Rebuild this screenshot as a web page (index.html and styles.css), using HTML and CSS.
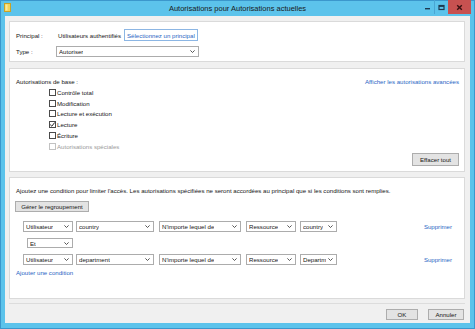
FILE: index.html
```html
<!DOCTYPE html>
<html lang="fr">
<head>
<meta charset="utf-8">
<title>Autorisations pour Autorisations actuelles</title>
<link rel="stylesheet" href="styles.css">
</head>
<body>
<div class="window">
  <div class="titlebar">
    <div class="tb-left">
      <svg class="app-icon" width="7" height="9" viewBox="0 0 7 9"><rect x="0.5" y="0.5" width="6" height="8" fill="#f3d35a" stroke="#c9a227"/><rect x="1.5" y="1.5" width="2" height="6" fill="#fbe99a"/></svg>
    </div>
    <div class="title">Autorisations pour Autorisations actuelles</div>
    <div class="tb-right">
      <div class="ctl ctl-min"><svg width="7" height="7" viewBox="0 0 7 7"><rect x="1" y="4" width="5" height="1.4" fill="#1d3a52"/></svg></div>
      <div class="ctl ctl-max"><svg width="7" height="7" viewBox="0 0 7 7"><rect x="1" y="1.5" width="5" height="4" fill="none" stroke="#1d3a52" stroke-width="1.2"/><rect x="1" y="1.5" width="5" height="1.4" fill="#1d3a52"/></svg></div>
      <div class="ctl ctl-close"><svg width="7" height="7" viewBox="0 0 7 7"><path d="M1.2 1.2 L5.8 5.8 M5.8 1.2 L1.2 5.8" stroke="#3a1010" stroke-width="1.4"/></svg></div>
    </div>
  </div>

  <div class="client">
    <section class="panel panel-principal">
      <div class="prow">
        <span class="lbl">Principal :</span>
        <span class="val">Utilisateurs authentifiés</span>
        <span class="pick">Sélectionnez un principal</span>
      </div>
      <div class="prow prow-type">
        <span class="lbl">Type :</span>
        <div class="dd dd-type"><span>Autoriser</span><svg class="chev" width="5" height="3" viewBox="0 0 5 3"><path d="M0.4 0.4 L2.5 2.5 L4.6 0.4" fill="none" stroke="#444" stroke-width="0.9"/></svg></div>
      </div>
    </section>

    <section class="panel panel-perms">
      <div class="perm-head">
        <span>Autorisations de base :</span>
        <a class="link">Afficher les autorisations avancées</a>
      </div>
      <ul class="checks">
        <li><span class="cb"></span>Contrôle total</li>
        <li><span class="cb"></span>Modification</li>
        <li><span class="cb"></span>Lecture et exécution</li>
        <li><span class="cb"><svg width="7" height="7" viewBox="0 0 7 7"><path d="M1.2 3.6 L2.8 5.2 L5.8 1.4" fill="none" stroke="#222" stroke-width="1"/></svg></span>Lecture</li>
        <li><span class="cb"></span>Écriture</li>
        <li class="disabled"><span class="cb"></span>Autorisations spéciales</li>
      </ul>
      <div class="perm-foot">
        <button class="btn btn-clear">Effacer tout</button>
      </div>
    </section>

    <section class="panel panel-cond">
      <p class="intro">Ajoutez une condition pour limiter l'accès. Les autorisations spécifiées ne seront accordées au principal que si les conditions sont remplies.</p>
      <button class="btn btn-group">Gérer le regroupement</button>
      <div class="crow">
        <div class="dd w-user"><span>Utilisateur</span><svg class="chev" width="5" height="3" viewBox="0 0 5 3"><path d="M0.4 0.4 L2.5 2.5 L4.6 0.4" fill="none" stroke="#444" stroke-width="0.9"/></svg></div>
        <div class="dd w-attr"><span>country</span><svg class="chev" width="5" height="3" viewBox="0 0 5 3"><path d="M0.4 0.4 L2.5 2.5 L4.6 0.4" fill="none" stroke="#444" stroke-width="0.9"/></svg></div>
        <div class="dd w-op"><span>N'importe lequel de</span><svg class="chev" width="5" height="3" viewBox="0 0 5 3"><path d="M0.4 0.4 L2.5 2.5 L4.6 0.4" fill="none" stroke="#444" stroke-width="0.9"/></svg></div>
        <div class="dd w-res"><span>Ressource</span><svg class="chev" width="5" height="3" viewBox="0 0 5 3"><path d="M0.4 0.4 L2.5 2.5 L4.6 0.4" fill="none" stroke="#444" stroke-width="0.9"/></svg></div>
        <div class="dd w-val"><span>country</span><svg class="chev" width="5" height="3" viewBox="0 0 5 3"><path d="M0.4 0.4 L2.5 2.5 L4.6 0.4" fill="none" stroke="#444" stroke-width="0.9"/></svg></div>
        <a class="link del">Supprimer</a>
      </div>
      <div class="crow crow-and">
        <div class="dd w-and"><span>Et</span><svg class="chev" width="5" height="3" viewBox="0 0 5 3"><path d="M0.4 0.4 L2.5 2.5 L4.6 0.4" fill="none" stroke="#444" stroke-width="0.9"/></svg></div>
      </div>
      <div class="crow">
        <div class="dd w-user"><span>Utilisateur</span><svg class="chev" width="5" height="3" viewBox="0 0 5 3"><path d="M0.4 0.4 L2.5 2.5 L4.6 0.4" fill="none" stroke="#444" stroke-width="0.9"/></svg></div>
        <div class="dd w-attr"><span>department</span><svg class="chev" width="5" height="3" viewBox="0 0 5 3"><path d="M0.4 0.4 L2.5 2.5 L4.6 0.4" fill="none" stroke="#444" stroke-width="0.9"/></svg></div>
        <div class="dd w-op"><span>N'importe lequel de</span><svg class="chev" width="5" height="3" viewBox="0 0 5 3"><path d="M0.4 0.4 L2.5 2.5 L4.6 0.4" fill="none" stroke="#444" stroke-width="0.9"/></svg></div>
        <div class="dd w-res"><span>Ressource</span><svg class="chev" width="5" height="3" viewBox="0 0 5 3"><path d="M0.4 0.4 L2.5 2.5 L4.6 0.4" fill="none" stroke="#444" stroke-width="0.9"/></svg></div>
        <div class="dd w-val"><span>Departm</span><svg class="chev" width="5" height="3" viewBox="0 0 5 3"><path d="M0.4 0.4 L2.5 2.5 L4.6 0.4" fill="none" stroke="#444" stroke-width="0.9"/></svg></div>
        <a class="link del">Supprimer</a>
      </div>
      <a class="link add">Ajouter une condition</a>
    </section>

    <footer class="footer">
      <button class="btn btn-ok">OK</button>
      <button class="btn btn-cancel">Annuler</button>
    </footer>
  </div>
</div>
</body>
</html>
```

FILE: styles.css
```css
* { box-sizing: border-box; margin: 0; padding: 0; }

html, body {
  width: 475px;
  height: 329px;
  overflow: hidden;
}

body {
  font-family: "Liberation Sans", Arial, sans-serif;
  font-size: 6.1px;
  color: #151515;
  background: #5bc2ea;
}

.window {
  height: 329px;
  display: flex;
  flex-direction: column;
  background: #5cc3eb;
  border: 1px solid #3b97cc;
}

/* title bar */
.titlebar {
  height: 15px;
  display: grid;
  grid-template-columns: 1fr auto 1fr;
  align-items: start;
}

.tb-left { padding: 2px 0 0 3px; }
.app-icon { display: block; }

.title {
  font-size: 7.5px;
  line-height: 15px;
  color: #1a1a1a;
  white-space: nowrap;
}

.tb-right {
  display: flex;
  justify-content: flex-end;
  padding-right: 3px;
  margin-top: -1px;
}

.ctl {
  height: 14px;
  display: flex;
  align-items: center;
  justify-content: center;
}
.ctl-min { width: 15px; border-right: 1px solid #4aa6d3; }
.ctl-max { width: 13px; }
.ctl-close { width: 23px; background: #c75150; }

/* client area */
.client {
  flex: 1;
  margin: 0 4px 5px;
  background: #f0f0f0;
  display: flex;
  flex-direction: column;
  padding: 5px 5px 0 4px;
}

.panel {
  background: #fff;
  border: 1px solid #dadada;
}

/* principal */
.panel-principal {
  height: 41px;
  padding: 7px 6px 4px;
}

.prow {
  display: flex;
  align-items: center;
  height: 12px;
}
.prow-type { margin-top: 5px; height: 11px; }

.lbl { width: 40px; }
.val { padding-left: 2px; width: 68px; }

.pick {
  height: 12px;
  display: flex;
  align-items: center;
  padding: 0 2px;
  border: 1px solid #8cb6e4;
  color: #2a66c4;
}

/* dropdowns */
.dd {
  height: 11px;
  border: 1px solid #acacac;
  background: #fff;
  display: flex;
  align-items: center;
  justify-content: space-between;
  padding: 0 3px 0 2px;
  white-space: nowrap;
  overflow: hidden;
}
.dd span { overflow: hidden; }
.chev { flex: none; margin-left: 2px; }

.dd-type { width: 143px; }

/* permissions */
.panel-perms {
  height: 104px;
  margin-top: 6px;
  padding: 7px 5px 5px 6px;
  display: flex;
  flex-direction: column;
}

.perm-head {
  height: 10px;
  display: flex;
  align-items: center;
  justify-content: space-between;
}

.link { color: #2a66c4; text-decoration: none; }

.checks {
  list-style: none;
  margin-left: 33px;
  margin-top: 1px;
}
.checks li {
  height: 10.8px;
  display: flex;
  align-items: center;
}
.cb {
  width: 7px;
  height: 7px;
  border: 1px solid #4a4a4a;
  background: #fff;
  margin-right: 1px;
  display: flex;
  align-items: center;
  justify-content: center;
}
.cb svg { display: block; margin: -1px; }
.checks .disabled { color: #9a9a9a; }
.checks .disabled .cb { border-color: #c2c2c2; }

.perm-foot {
  margin-top: auto;
  display: flex;
  justify-content: flex-end;
}

.btn {
  font-family: inherit;
  font-size: 6.1px;
  color: #151515;
  background: #e3e3e3;
  border: 1px solid #adadad;
  height: 11px;
  display: flex;
  align-items: center;
  justify-content: center;
}

.btn-clear { width: 47px; height: 13px; }

/* conditions */
.panel-cond {
  height: 122px;
  margin-top: 5px;
  padding: 8px 5px 0 6px;
  display: flex;
  flex-direction: column;
  align-items: flex-start;
}

.intro { height: 10px; line-height: 10px; white-space: nowrap; }

.btn-group { width: 74px; margin-top: 5px; margin-left: -1px; }

.crow {
  align-self: stretch;
  display: flex;
  align-items: center;
  margin-top: 9px;
  padding-left: 7px;
}
.crow-and { margin-top: 6px; padding-left: 11px; }
.crow-and + .crow { margin-top: 6px; }

.w-user { width: 50px; }
.w-attr { width: 78px; margin-left: 3px; }
.w-op   { width: 82px; margin-left: 5px; }
.w-res  { width: 50px; margin-left: 5px; }
.w-val  { width: 37px; margin-left: 4px; }
.w-and  { width: 46px; height: 10px; }

.del { margin-left: auto; margin-right: 7px; }

.add { margin-top: 3px; line-height: 10px; }

/* footer */
.footer {
  margin-top: 4px;
  border-top: 1px solid #dcdcdc;
  flex: 1;
  display: flex;
  justify-content: flex-end;
  align-items: flex-start;
  padding: 5px 1px 0 0;
  gap: 10px;
}
.btn-ok { width: 32px; }
.btn-cancel { width: 36px; }
```
